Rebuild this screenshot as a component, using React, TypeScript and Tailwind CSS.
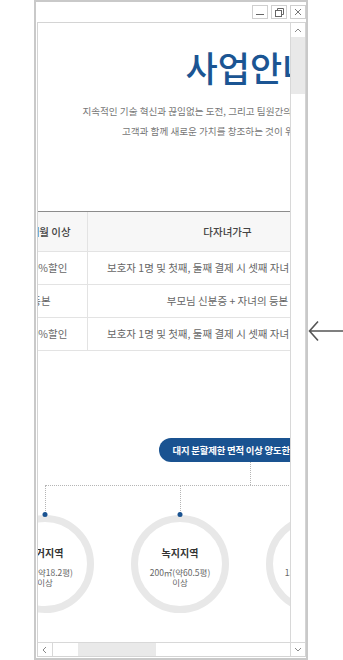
import React from 'react';

const rows = [
  { a: '수강료 전체 10%할인', b: '보호자 1명 및 첫째, 둘째 결제 시 셋째 자녀 5%할인 적용', c: '수강료 총 5%할인' },
  { a: '주민등록 등본', b: '부모님 신분증 + 자녀의 등본', c: '가족관계증명서' },
  { a: '수강료 전체 10%할인', b: '보호자 1명 및 첫째, 둘째 결제 시 셋째 자녀 5%할인 적용', c: '수강료 총 5%할인' },
];

const zones = [
  { name: '주거지역', area: '60㎡(약18.2평)' },
  { name: '녹지지역', area: '200㎡(약60.5평)' },
  { name: '상업지역', area: '150㎡(약45.4평)' },
  { name: '공업지역', area: '150㎡(약45.4평)' },
];

function Chevron({ dir }: { dir: 'up' | 'down' | 'left' }) {
  const d = dir === 'up' ? 'M1 4 L4 1 L7 4' : dir === 'down' ? 'M1 1 L4 4 L7 1' : 'M4 1 L1 4 L4 7';
  const size = dir === 'left' ? { w: 6, h: 8 } : { w: 8, h: 5 };
  return (
    <svg width={size.w} height={size.h} viewBox={`0 0 ${size.w} ${size.h}`} fill="none">
      <path d={d} stroke="#8a8a8a" strokeWidth={1} />
    </svg>
  );
}

function TitleBar() {
  return (
    <div className="h-[20px] flex justify-end items-start pt-[3px] gap-[3px] shrink-0">
      <div className="w-[16px] h-[14px] border border-[#cfcfcf] flex items-end justify-center pb-[3px]">
        <div className="w-[8px] h-px bg-[#666]" />
      </div>
      <div className="w-[16px] h-[14px] border border-[#cfcfcf] flex items-center justify-center">
        <svg width="9" height="9" viewBox="0 0 9 9" fill="none">
          <path d="M2.5 2.5 V0.5 H8.5 V6.5 H6.5" stroke="#666" strokeWidth={1} />
          <rect x="0.5" y="2.5" width="6" height="6" stroke="#666" strokeWidth={1} />
        </svg>
      </div>
      <div className="w-[16px] h-[14px] border border-[#cfcfcf] flex items-center justify-center">
        <svg width="8" height="8" viewBox="0 0 8 8" fill="none">
          <path d="M1 1 L7 7 M7 1 L1 7" stroke="#777" strokeWidth={1} />
        </svg>
      </div>
    </div>
  );
}

function Page() {
  return (
    <div className="w-[592px] -ml-[84px] pt-[26px] flex flex-col items-center text-[#333]">
      <h1 className="text-[35px] leading-none font-medium text-[#1b5593]">사업안내</h1>
      <p className="mt-[17px] text-[9.6px] leading-[20px] text-[#777] text-center whitespace-nowrap">
        지속적인 기술 혁신과 끊임없는 도전, 그리고 팀원간의 소통을 통해 함께 성장하는 기업
        <br />
        고객과 함께 새로운 가치를 창조하는 것이 위시스템의 목표입니다.
      </p>

      <div className="mt-[70px] w-[592px] text-[10.5px] whitespace-nowrap">
        <div className="flex h-[41px] border-t border-b border-t-[#8c8c8c] border-b-[#e3e3e3] bg-[#f7f7f7] text-[#444] font-medium">
          <div className="w-[134px] border-r border-[#e3e3e3] flex items-center justify-center pl-[4px]">장기 수강 12개월 이상</div>
          <div className="w-[280px] border-r border-[#e3e3e3] flex items-center justify-center">다자녀가구</div>
          <div className="flex-1 flex items-center justify-center">형제자매</div>
        </div>
        {rows.map((r, i) => (
          <div key={i} className="flex h-[33px] border-b border-[#e3e3e3] text-[#666]">
            <div className="w-[134px] border-r border-[#e3e3e3] flex items-center justify-center">{r.a}</div>
            <div className="w-[280px] border-r border-[#e3e3e3] flex items-center justify-center">{r.b}</div>
            <div className="flex-1 flex items-center justify-center">{r.c}</div>
          </div>
        ))}
      </div>

      <div className="mt-[87px] h-[24px] px-[14px] rounded-full bg-[#1a5391] text-white text-[9.4px] font-bold tracking-[-0.2px] flex items-center justify-center whitespace-nowrap">
        대지 분할제한 면적 이상 양도한 경우 가능
      </div>
      <div className="h-[23px] border-l border-dotted border-[#b5b5b5]" />
      <div className="w-[540px] mr-[5px] flex flex-col">
        <div className="mx-[67px] border-t border-dotted border-[#b5b5b5]" />
        <div className="flex">
          {zones.map((z) => (
            <div key={z.name} className="w-[135px] flex flex-col items-center">
              <div className="h-[29px] border-l border-dotted border-[#b5b5b5]" />
              <div className="relative w-[98px] h-[98px] pt-[5px] rounded-full border-[7px] border-[#e8e8e8] flex flex-col items-center justify-center">
                <span className="absolute -top-[10px] left-1/2 -translate-x-1/2 w-[5px] h-[5px] rounded-full bg-[#1a5391]" />
                <span className="text-[10px] leading-[14px] font-bold text-[#333]">{z.name}</span>
                <span className="mt-[7px] text-[8.5px] leading-[10px] text-[#666] whitespace-nowrap">{z.area}</span>
                <span className="text-[8.5px] leading-[10px] text-[#666]">이상</span>
              </div>
            </div>
          ))}
        </div>
      </div>
    </div>
  );
}

export default function App() {
  return (
    <div className="w-[343px] h-[660px] bg-white flex overflow-hidden font-['Noto_Sans_CJK_KR','Noto_Sans',sans-serif]">
      <div className="ml-[34px] w-[274px] h-[660px] border-2 border-[#c9c9c9] flex flex-col shrink-0">
        <TitleBar />
        <div className="ml-px w-[269px] h-[635px] border border-[#d4d4d4] flex">
          <div className="w-[252px] flex flex-col">
            <div className="flex-1 min-h-0 overflow-hidden">
              <Page />
            </div>
            <div className="h-[14px] border-t border-[#d8d8d8] flex shrink-0">
              <div className="w-[15px] border-r border-[#d8d8d8] flex items-center justify-center">
                <Chevron dir="left" />
              </div>
              <div className="ml-[25px] w-[78px] bg-[#e9e9e9]" />
            </div>
          </div>
          <div className="w-[15px] border-l border-[#d8d8d8] flex flex-col">
            <div className="h-[14px] flex items-center justify-center">
              <Chevron dir="up" />
            </div>
            <div className="h-[57px] bg-[#e9e9e9]" />
            <div className="flex-1" />
            <div className="h-[14px] border-t border-[#d8d8d8] flex items-center justify-center">
              <Chevron dir="down" />
            </div>
          </div>
        </div>
      </div>
      <div className="w-[35px] pt-[320px] shrink-0">
        <svg width="35" height="22" viewBox="0 0 35 22" fill="none">
          <path d="M35 11 H2 M10 1.5 L1.5 11 L10 20.5" stroke="#555" strokeWidth={1.6} />
        </svg>
      </div>
    </div>
  );
}
